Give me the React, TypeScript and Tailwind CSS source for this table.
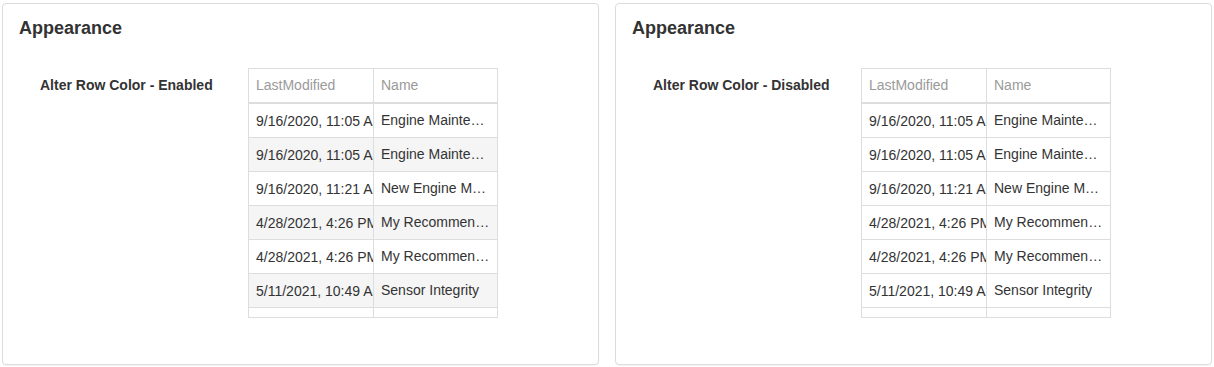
import React from 'react';

interface GridRow {
  lastModified: string;
  name: string;
}

const rows: GridRow[] = [
  { lastModified: '9/16/2020, 11:05 AM', name: 'Engine Maintenance Report' },
  { lastModified: '9/16/2020, 11:05 AM', name: 'Engine Maintenance Report' },
  { lastModified: '9/16/2020, 11:21 AM', name: 'New Engine Maintenance' },
  { lastModified: '4/28/2021, 4:26 PM', name: 'My Recommendations' },
  { lastModified: '4/28/2021, 4:26 PM', name: 'My Recommendations' },
  { lastModified: '5/11/2021, 10:49 AM', name: 'Sensor Integrity' },
  { lastModified: '5/11/2021, 10:52 AM', name: 'Engine Health' },
  { lastModified: '6/02/2021, 9:14 AM', name: 'Fleet Overview' },
];

function DataGrid({ altRows }: { altRows: boolean }) {
  return (
    <div className="w-[250px] h-[250px] shrink-0 overflow-hidden border border-[#dddddd] bg-white text-[14px] leading-[20px]">
      {/* Header */}
      <div className="flex h-[35px] border-b-2 border-[#dddddd] text-[#9a9a9a]">
        <div className="w-[125px] shrink-0 flex items-center pl-[7px] pr-[7px] pb-px border-r border-[#dddddd] overflow-hidden whitespace-nowrap">
          LastModified
        </div>
        <div className="w-[123px] shrink-0 flex items-center px-[7px] pb-px overflow-hidden whitespace-nowrap">
          Name
        </div>
      </div>

      {/* Rows */}
      {rows.map((row, i) => (
        <div
          key={i}
          className={`flex h-[34px] border-b border-[#dddddd] text-[#333333] ${
            altRows && i % 2 === 1 ? 'bg-[#f5f5f5]' : 'bg-white'
          }`}
        >
          <div className="w-[125px] shrink-0 flex items-center px-[7px] border-r border-[#dddddd] overflow-hidden whitespace-nowrap">
            {row.lastModified}
          </div>
          <div className="w-[123px] shrink-0 px-[7px] overflow-hidden whitespace-nowrap text-ellipsis leading-[33px]">
            {row.name}
          </div>
        </div>
      ))}
    </div>
  );
}

function AppearanceCard({ altRows }: { altRows: boolean }) {
  return (
    <div className="flex-1 h-[362px] border border-[#dcdcdc] rounded-[4px] bg-white px-4 pt-[14px] shadow-[0_1px_1px_rgba(0,0,0,0.04)]">
      <h2 className="text-[18px] leading-[20px] font-bold text-[#333333]">Appearance</h2>
      <div className="flex mt-[30px]">
        <div className="ml-[21px] w-[208px] shrink-0 mt-[7px] text-[14px] leading-[20px] font-bold text-[#333333]">
          Alter Row Color - {altRows ? 'Enabled' : 'Disabled'}
        </div>
        <DataGrid altRows={altRows} />
      </div>
    </div>
  );
}

export default function App() {
  return (
    <div
      className="w-[1214px] h-[367px] bg-white flex gap-4 px-[2px] pt-[3px]"
      style={{ fontFamily: '"Liberation Sans", Arial, sans-serif' }}
    >
      <AppearanceCard altRows={true} />
      <AppearanceCard altRows={false} />
    </div>
  );
}
